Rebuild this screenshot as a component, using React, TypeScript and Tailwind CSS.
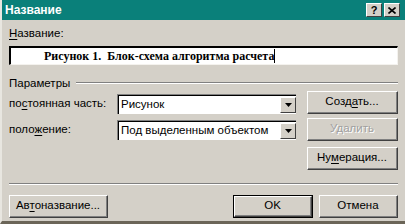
import React from 'react';

// Classic Windows raised button
function Btn({ children, disabled, def, className = '' }: { children: React.ReactNode; disabled?: boolean; def?: boolean; className?: string }) {
  return (
    <div className={`${def ? 'border border-black' : ''} ${className}`}>
      <div className="h-full border-t border-l border-white border-r border-b border-r-[#404040] border-b-[#404040]">
        <div className="h-full flex items-center justify-center border-r border-b border-r-[#808080] border-b-[#808080]">
          <span className={disabled ? 'text-[#a0a0a0]' : 'text-black'} style={disabled ? { textShadow: '1px 1px 0 #fff' } : undefined}>
            {children}
          </span>
        </div>
      </div>
    </div>
  );
}

function Combo({ value }: { value: string }) {
  return (
    <div className="w-[179px] h-[20px] border-t border-l border-[#808080] border-r-white border-b-white flex">
      <div className="flex-1 flex border-t border-l border-black border-r-[#d4d0c8] border-b-[#d4d0c8] bg-white">
        <span className="flex-1 pl-[2px] leading-[17px] text-black">{value}</span>
        <div className="w-[16px] h-[16px] my-auto mr-0 bg-[#d4d0c8] border-t border-l border-white border-r border-b border-r-[#404040] border-b-[#404040] flex items-center justify-center">
          <svg width="7" height="4" viewBox="0 0 7 4"><path d="M0 0h7L3.5 4z" fill="#000" /></svg>
        </div>
      </div>
    </div>
  );
}

const U = ({ c }: { c: string }) => <span className="underline underline-offset-2">{c}</span>;

export default function App() {
  return (
    <div
      className="w-[405px] h-[224px] bg-[#d4d0c8] flex flex-col overflow-hidden border-l-2 border-l-[#e8e6e0] border-b-[3px] border-b-[#6b6558] text-[11.5px]"
      style={{ fontFamily: '"Liberation Sans", Arial, sans-serif' }}
    >
      {/* Title bar */}
      <div className="h-[20px] bg-[#0a807a] flex items-center pl-[3px] pr-[5px]">
        <span className="flex-1 text-white font-bold text-[12px] leading-none">Название</span>
        <div className="flex gap-[2px]">
          <div className="w-[16px] h-[14px] bg-[#d4d0c8] border-t border-l border-white border-r border-b border-r-[#404040] border-b-[#404040] flex items-center justify-center font-bold text-[11px] leading-none">?</div>
          <div className="w-[16px] h-[14px] bg-[#d4d0c8] border-t border-l border-white border-r border-b border-r-[#404040] border-b-[#404040] flex items-center justify-center">
            <svg width="8" height="7" viewBox="0 0 8 7"><path d="M0.5 0.5l7 6M7.5 0.5l-7 6" stroke="#000" strokeWidth="1.6" /></svg>
          </div>
        </div>
      </div>

      <div className="flex-1 flex flex-col pl-[7px] pr-[7px]">
        {/* Name label + field */}
        <div className="mt-[6px] leading-[14px]"><U c="Н" />азвание:</div>
        <div className="mt-[6px] h-[19px] border-t-2 border-l-2 border-black border-r border-b border-r-[#f4f2ee] border-b-[#f4f2ee] bg-white flex items-center">
          <span
            className="pl-[33px] font-bold text-[12px] leading-none text-black"
            style={{ fontFamily: '"Liberation Serif", "Times New Roman", serif' }}
          >
            Рисунок 1.&nbsp; Блок-схема алгоритма расчета
          </span>
          <span className="w-[1px] h-[14px] bg-black" />
        </div>

        {/* Parameters group */}
        <div className="mt-[11px] flex items-center gap-[6px] leading-[14px]">
          <span>Параметры</span>
          <div className="flex-1 h-[2px] border-t border-[#808080] border-b border-b-white" />
        </div>

        <div className="flex mt-[0px]">
          <div className="flex flex-col">
            <div className="flex items-center h-[26px] mt-[1px]">
              <span className="w-[108px]">по<U c="с" />тоянная часть:</span>
              <Combo value="Рисунок" />
            </div>
            <div className="flex items-center h-[26px]">
              <span className="w-[108px]">поло<U c="ж" />ение:</span>
              <Combo value="Под выделенным объектом" />
            </div>
          </div>
          <div className="ml-auto flex flex-col gap-[4px] mt-[1px]">
            <Btn className="w-[91px] h-[23px]">Созд<U c="а" />ть...</Btn>
            <Btn className="w-[91px] h-[23px]" disabled>Удалить</Btn>
            <Btn className="w-[91px] h-[23px] mt-[2px]">Ну<U c="м" />ерация...</Btn>
          </div>
        </div>

        <div className="mt-[13px] h-[2px] border-t border-[#808080] border-b border-b-white" />

        <div className="mt-[10px] flex">
          <Btn className="w-[99px] h-[23px]">Ав<U c="т" />оназвание...</Btn>
          <Btn className="w-[80px] h-[23px] ml-auto" def>OK</Btn>
          <Btn className="w-[79px] h-[23px] ml-[6px]">Отмена</Btn>
        </div>
      </div>
    </div>
  );
}
